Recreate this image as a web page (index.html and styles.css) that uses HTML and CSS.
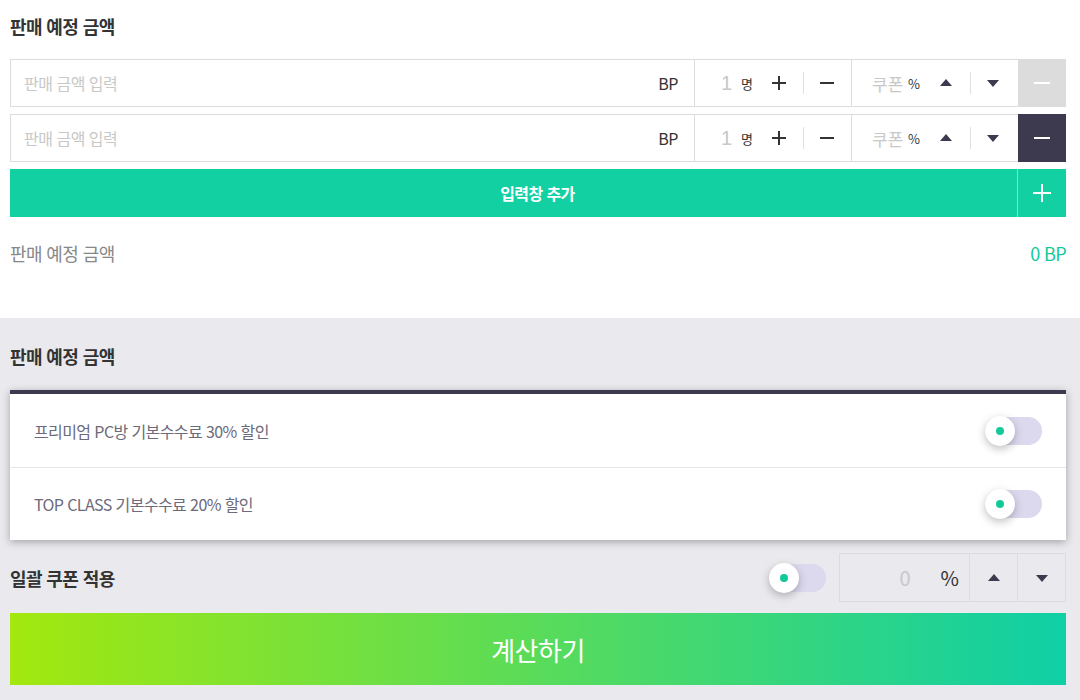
FILE: index.html
```html
<!DOCTYPE html>
<html lang="ko">
<head>
    <meta charset="UTF-8">
    <meta name="viewport" content="width=device-width, initial-scale=1.0">
    <title>판매 예정 금액</title>
    <link rel="stylesheet" href="styles.css">
</head>
<body>
    <!-- 판매 금액 입력 -->
    <section class="sale-section">
        <h2 class="section-title">판매 예정 금액</h2>

        <div class="price-row">
            <div class="price-cell">
                <input type="text" class="price-input" placeholder="판매 금액 입력">
                <span class="unit">BP</span>
            </div>
            <div class="count-cell">
                <span class="count-num">1</span>
                <span class="count-unit">명</span>
                <button class="icon-btn plus" aria-label="추가"></button>
                <span class="mini-divider"></span>
                <button class="icon-btn minus" aria-label="빼기"></button>
            </div>
            <div class="coupon-cell">
                <span class="coupon-label">쿠폰</span>
                <span class="coupon-unit">%</span>
                <button class="arrow-btn up" aria-label="증가"></button>
                <span class="mini-divider"></span>
                <button class="arrow-btn down" aria-label="감소"></button>
            </div>
            <button class="remove-btn disabled" aria-label="삭제"></button>
        </div>

        <div class="price-row">
            <div class="price-cell">
                <input type="text" class="price-input" placeholder="판매 금액 입력">
                <span class="unit">BP</span>
            </div>
            <div class="count-cell">
                <span class="count-num">1</span>
                <span class="count-unit">명</span>
                <button class="icon-btn plus" aria-label="추가"></button>
                <span class="mini-divider"></span>
                <button class="icon-btn minus" aria-label="빼기"></button>
            </div>
            <div class="coupon-cell">
                <span class="coupon-label">쿠폰</span>
                <span class="coupon-unit">%</span>
                <button class="arrow-btn up" aria-label="증가"></button>
                <span class="mini-divider"></span>
                <button class="arrow-btn down" aria-label="감소"></button>
            </div>
            <button class="remove-btn" aria-label="삭제"></button>
        </div>

        <button class="add-row-btn">
            <span class="add-label">입력창 추가</span>
            <span class="add-plus"></span>
        </button>

        <div class="summary">
            <span class="summary-label">판매 예정 금액</span>
            <span class="summary-value">0 BP</span>
        </div>
    </section>

    <!-- 할인 옵션 -->
    <section class="discount-section">
        <h2 class="section-title">판매 예정 금액</h2>

        <div class="option-card">
            <div class="option-row">
                <span class="option-text">프리미엄 PC방 기본수수료 30% 할인</span>
                <span class="toggle"><span class="knob"></span></span>
            </div>
            <div class="option-row">
                <span class="option-text">TOP CLASS 기본수수료 20% 할인</span>
                <span class="toggle"><span class="knob"></span></span>
            </div>
        </div>

        <div class="bulk-row">
            <span class="bulk-label">일괄 쿠폰 적용</span>
            <span class="toggle"><span class="knob"></span></span>
            <div class="bulk-box">
                <div class="bulk-value">
                    <span class="bulk-num">0</span>
                    <span class="bulk-unit">%</span>
                </div>
                <button class="arrow-btn up bulk-arrow" aria-label="증가"></button>
                <button class="arrow-btn down bulk-arrow" aria-label="감소"></button>
            </div>
        </div>

        <button class="calc-btn">계산하기</button>
    </section>
</body>
</html>
```

FILE: styles.css
```css
* {
    box-sizing: border-box;
}

body {
    margin: 0;
    font-family: "Noto Sans CJK KR", "Noto Sans", sans-serif;
    color: #333;
    background: #e9e9ee;
}

button {
    font-family: inherit;
    border: none;
    background: none;
    padding: 0;
    cursor: pointer;
}

.section-title {
    margin: 0;
    font-size: 18px;
    line-height: 24px;
    font-weight: 700;
    color: #333;
    letter-spacing: -0.6px;
}

/* 상단 입력 영역 */
.sale-section {
    background: #fff;
    padding: 14px 14px 53px 10px;
}

.price-row {
    display: flex;
    height: 48px;
    margin-top: 7px;
}

.sale-section .section-title + .price-row {
    margin-top: 21px;
}

.price-cell {
    flex: 1;
    display: flex;
    align-items: center;
    border: 1px solid #dcdcdc;
    border-right: none;
    padding: 0 16px 0 11px;
}

.price-input {
    flex: 1;
    border: none;
    outline: none;
    font-family: inherit;
    font-size: 16px;
    color: #333;
    letter-spacing: -0.5px;
    background: transparent;
    padding: 0 2px;
}

.price-input::placeholder {
    color: #c8c8c8;
}

.unit {
    font-size: 16px;
    color: #333;
    letter-spacing: -0.5px;
}

.count-cell,
.coupon-cell {
    display: flex;
    align-items: center;
    border: 1px solid #dcdcdc;
    border-right: none;
}

.count-cell {
    width: 157px;
    padding-left: 26px;
}

.coupon-cell {
    width: 167px;
    padding-left: 20px;
}

.count-num {
    font-size: 20px;
    color: #c8c8c8;
    font-family: "Liberation Sans", sans-serif;
    width: 20px;
}

.count-unit {
    font-size: 13px;
    color: #333;
    width: 23px;
}

.icon-btn {
    width: 30px;
    height: 30px;
    position: relative;
}

.icon-btn::before,
.icon-btn.plus::after {
    content: "";
    position: absolute;
    left: 8px;
    top: 14px;
    width: 14px;
    height: 2px;
    background: #333;
}

.icon-btn.plus::after {
    transform: rotate(90deg);
}

.mini-divider {
    width: 1px;
    height: 22px;
    background: #e0e0e0;
    margin: 0 8px 0 9px;
}

.coupon-cell .mini-divider {
    margin: 0 4px 0 6px;
}

.coupon-label {
    font-size: 17px;
    color: #c8c8c8;
    width: 36px;
}

.coupon-unit {
    font-size: 13px;
    color: #333;
    width: 20px;
}

.arrow-btn {
    width: 36px;
    height: 30px;
    position: relative;
}

.arrow-btn::before {
    content: "";
    position: absolute;
    left: 50%;
    top: 50%;
    margin-left: -6px;
    border-left: 6px solid transparent;
    border-right: 6px solid transparent;
}

.arrow-btn.up::before {
    margin-top: -4px;
    border-bottom: 7px solid #3d3a4f;
}

.arrow-btn.down::before {
    margin-top: -3px;
    border-top: 7px solid #3d3a4f;
}

.remove-btn {
    width: 48px;
    height: 48px;
    background: #3d3a4f;
    position: relative;
}

.remove-btn.disabled {
    background: #dcdcdc;
}

.remove-btn::before {
    content: "";
    position: absolute;
    left: 16px;
    top: 23px;
    width: 16px;
    height: 2px;
    background: #fff;
}

.add-row-btn {
    display: flex;
    width: 100%;
    height: 48px;
    margin-top: 7px;
    background: #13d0a2;
    color: #fff;
}

.add-label {
    flex: 1;
    align-self: center;
    font-size: 16px;
    font-weight: 700;
    letter-spacing: -0.6px;
    padding-left: 48px;
}

.add-plus {
    width: 49px;
    height: 48px;
    border-left: 1px solid rgba(255, 255, 255, 0.45);
    position: relative;
}

.add-plus::before,
.add-plus::after {
    content: "";
    position: absolute;
    left: 15px;
    top: 23px;
    width: 18px;
    height: 2px;
    background: #fff;
}

.add-plus::after {
    transform: rotate(90deg);
}

.summary {
    display: flex;
    justify-content: space-between;
    margin-top: 24px;
    font-size: 18px;
    line-height: 24px;
    letter-spacing: -0.6px;
}

.summary-label {
    color: #888;
}

.summary-value {
    color: #13c99a;
}

/* 하단 할인 영역 */
.discount-section {
    padding: 26px 14px 15px 10px;
}

.option-card {
    margin-top: 22px;
    background: #fff;
    border-top: 4px solid #3d3a4f;
    box-shadow: 0 2px 8px rgba(0, 0, 0, 0.3);
}

.option-row {
    display: flex;
    align-items: center;
    justify-content: space-between;
    height: 73px;
    padding: 0 24px 0 24px;
}

.option-row + .option-row {
    border-top: 1px solid #e6e6e6;
    height: 73px;
}

.option-text {
    font-size: 16px;
    color: #6c6a7b;
    letter-spacing: -0.6px;
}

.toggle {
    width: 57px;
    height: 28px;
    border-radius: 14px;
    background: #dcd8ee;
    position: relative;
}

.knob {
    position: absolute;
    left: 0;
    top: -1px;
    width: 30px;
    height: 30px;
    border-radius: 50%;
    background: #fff;
    box-shadow: 0 3px 8px rgba(0, 0, 0, 0.25);
}

.knob::before {
    content: "";
    position: absolute;
    left: 11px;
    top: 11px;
    width: 8px;
    height: 8px;
    border-radius: 50%;
    background: #13c99a;
}

.bulk-row {
    display: flex;
    align-items: center;
    margin-top: 13px;
}

.bulk-label {
    flex: 1;
    font-size: 18px;
    font-weight: 700;
    color: #333;
    letter-spacing: -0.6px;
}

.bulk-box {
    display: flex;
    width: 227px;
    height: 49px;
    margin-left: 13px;
    border: 1px solid #dcdcdc;
}

.bulk-value {
    flex: 1;
    display: flex;
    align-items: center;
    justify-content: flex-end;
    padding-right: 10px;
    font-size: 20px;
}

.bulk-num {
    color: #c8c8c8;
    margin-right: 30px;
}

.bulk-unit {
    color: #333;
}

.bulk-arrow {
    width: 48px;
    height: 47px;
    border-left: 1px solid #dcdcdc;
}

.calc-btn {
    display: block;
    width: 100%;
    height: 72px;
    margin-top: 11px;
    background: linear-gradient(to right, #a3e80e, #0fcfa6);
    color: #fff;
    font-size: 26px;
    letter-spacing: -0.5px;
}
```
